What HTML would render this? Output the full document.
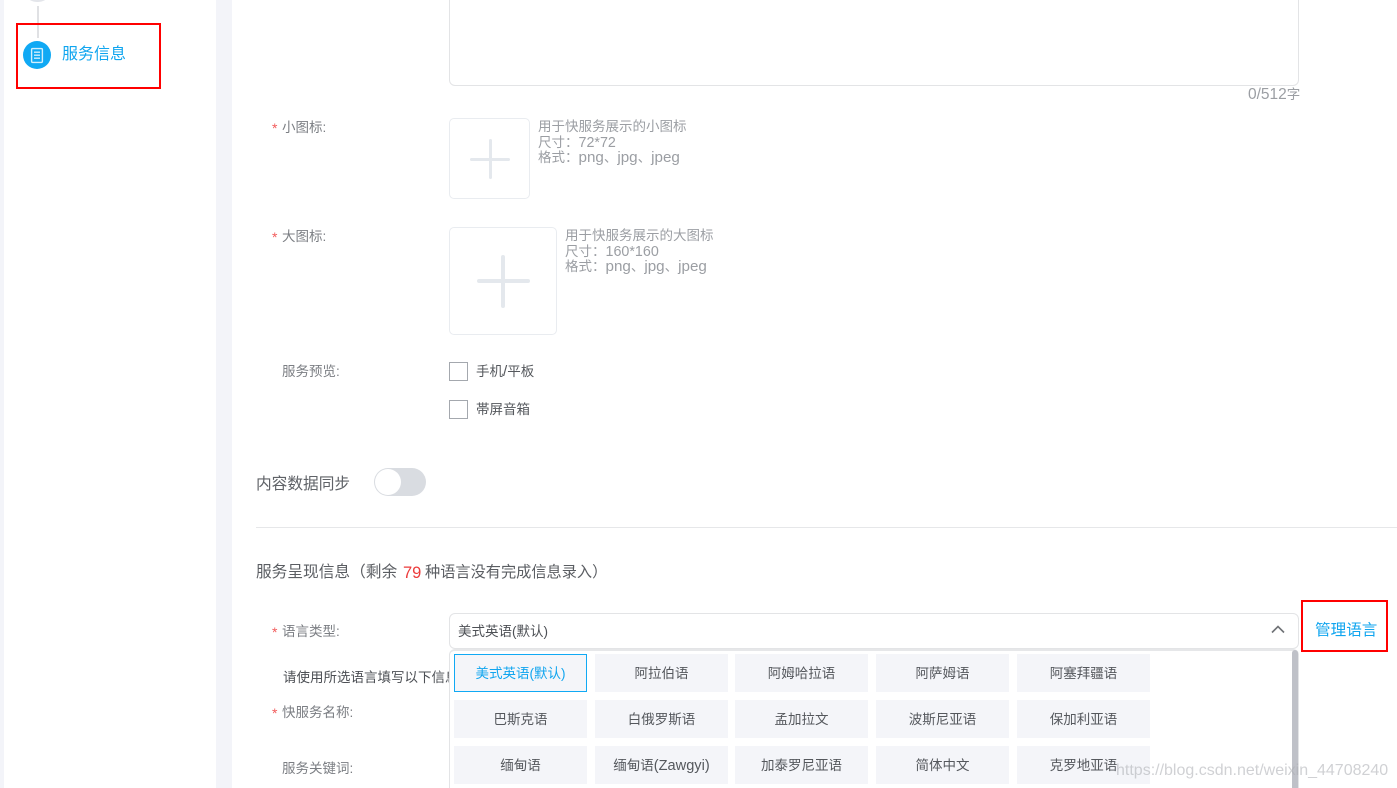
<!DOCTYPE html>
<html lang="zh"><head><meta charset="utf-8"><title>服务信息</title>
<style>
html,body{margin:0;padding:0;background:#fff;width:1397px;height:788px;overflow:hidden}
#p{position:absolute;left:0;top:0;width:1397px;height:788px;overflow:hidden;font-family:"Liberation Sans","Noto Sans CJK SC",sans-serif;color:#55585d}
#p div{position:absolute;box-sizing:border-box}
.t{white-space:nowrap;line-height:20px;font-size:13.5px}
.l{color:#7b7e83}
.h{color:#9b9ea3;font-size:13.5px;line-height:15.5px;white-space:nowrap}
.n{font-size:14.3px;line-height:0}
.m{font-size:15.2px;line-height:0}
.s{color:#f25b5b;font-size:14px;line-height:20px}
.up{border:1.5px solid #e9ecf0;border-radius:5px;background:#fff}
.c{border:1.5px solid #a4a8ae;background:#fff;width:19px;height:19px}
.o{width:133px;height:38px;background:#f4f5f9;text-align:center;line-height:40px;font-size:13.5px;color:#55585d;white-space:nowrap}
.r{border:2px solid #f00}
</style></head><body><div id="p">
<div style="left:0;top:0;width:4px;height:788px;background:#f3f4f9"></div>
<div style="left:216px;top:0;width:16px;height:788px;background:#f3f4f9"></div>

<div style="left:28px;top:-8px;width:19px;height:10px;border-radius:50%;background:#e3e5ea"></div>
<div style="left:37px;top:6px;width:2px;height:32px;background:#e0e1e4"></div>
<div style="left:23px;top:41px;width:28px;height:28px;border-radius:50%;background:#10a9f4"></div>
<svg style="position:absolute;left:23px;top:41px" width="28" height="28" viewBox="0 0 28 28" fill="none" stroke="#d3effd" stroke-width="1.4"><rect x="8.6" y="7.6" width="10.8" height="13.8" rx="1"/><path d="M11 11.2h6M11 14.2h6M11 17.2h6"/></svg>
<div class="t" style="left:62px;top:46px;font-size:16px;line-height:18px;color:#10a5ef">服务信息</div>
<div class="r" style="left:16px;top:23px;width:145px;height:66px"></div>

<div style="left:449px;top:-10px;width:850px;height:96px;border:1px solid #e3e4e6;border-radius:6px"></div>
<div class="t" style="left:1248px;top:85px;color:#9b9ea3;font-size:13.5px"><span class="m" style="font-size:15.5px">0/512</span>字</div>

<div class="s" style="left:272px;top:118px">*</div>
<div class="t l" style="left:282px;top:118px">小图标:</div>
<div class="up" style="left:449px;top:118px;width:81px;height:81px"></div>
<div style="left:470px;top:158px;width:40px;height:3px;background:#e4e8ed;border-radius:2px"></div>
<div style="left:489px;top:139px;width:3px;height:40px;background:#e4e8ed;border-radius:2px"></div>
<div class="h" style="left:538px;top:119px">用于快服务展示的小图标<br>尺寸：<span class="n">72*72</span><br>格式：<span class="m">png</span>、<span class="m">jpg</span>、<span class="m">jpeg</span></div>

<div class="s" style="left:272px;top:227px">*</div>
<div class="t l" style="left:282px;top:227px">大图标:</div>
<div class="up" style="left:449px;top:227px;width:108px;height:108px"></div>
<div style="left:477px;top:279px;width:53px;height:4px;background:#e4e8ed;border-radius:2px"></div>
<div style="left:501px;top:255px;width:4px;height:53px;background:#e4e8ed;border-radius:2px"></div>
<div class="h" style="left:565px;top:228px">用于快服务展示的大图标<br>尺寸：<span class="n">160*160</span><br>格式：<span class="m">png</span>、<span class="m">jpg</span>、<span class="m">jpeg</span></div>

<div class="t l" style="left:282px;top:362px">服务预览:</div>
<div class="c" style="left:449px;top:362px"></div>
<div class="t" style="left:476px;top:362px">手机<span class="m">/</span>平板</div>
<div class="c" style="left:449px;top:400px"></div>
<div class="t" style="left:476px;top:400px">帯屏音箱</div>

<div class="t" style="left:256px;top:476px;font-size:15.7px;line-height:18px;color:#5f6267">内容数据同步</div>
<div style="left:374px;top:468px;width:52px;height:28px;border-radius:14px;background:#d9dce1"></div>
<div style="left:375px;top:469px;width:26px;height:26px;border-radius:50%;background:#fff"></div>

<div style="left:256px;top:527px;width:1141px;height:1px;background:#e6e7e9"></div>

<div class="t" style="left:256px;top:564px;font-size:15.7px;line-height:18px;color:#5a5d62">服务呈现信息（剩余</div>
<div class="t" style="left:403px;top:564px;font-size:16.5px;line-height:18px;color:#ec3b3b">79</div>
<div class="t" style="left:425px;top:564px;font-size:15.2px;line-height:18px;color:#5a5d62">种语言没有完成信息录入）</div>

<div class="s" style="left:272px;top:622px">*</div>
<div class="t l" style="left:282px;top:622px">语言类型:</div>
<div style="left:449px;top:613px;width:850px;height:36px;border:1px solid #e3e4e6;border-radius:6px"></div>
<div class="t" style="left:458px;top:622px;font-size:13.5px;color:#4d5055">美式英语(默认)</div>
<svg style="position:absolute;left:1270px;top:623px" width="16" height="12" viewBox="0 0 16 12" fill="none" stroke="#6f7276" stroke-width="1.6"><path d="M2 9.5L8 3.5L14 9.5"/></svg>
<div class="r" style="left:1301px;top:600px;width:87px;height:52px"></div>
<div class="t" style="left:1315px;top:622px;font-size:15.6px;line-height:18px;color:#10a5ef">管理语言</div>

<div class="t" style="left:283px;top:668px;color:#4d5055">请使用所选语言填写以下信息</div>
<div class="s" style="left:272px;top:703px">*</div>
<div class="t l" style="left:282px;top:703px">快服务名称:</div>
<div class="t l" style="left:282px;top:759px">服务关键词:</div>

<div style="left:449px;top:649px;width:850px;height:150px;background:#fff;border:1px solid #e3e4e6;border-top:2px solid #e6e7e9;border-radius:6px 6px 0 0"></div>
<div style="left:1292px;top:650px;width:6px;height:138px;background:#bfc1c8;border-radius:3px 3px 0 0"></div>

<div class="o" style="left:454px;top:654px;color:#10a5ef;border:1px solid #10a9f4;line-height:38px">美式英语(默认)</div>
<div class="o" style="left:595px;top:654px">阿拉伯语</div>
<div class="o" style="left:735px;top:654px">阿姆哈拉语</div>
<div class="o" style="left:876px;top:654px">阿萨姆语</div>
<div class="o" style="left:1017px;top:654px">阿塞拜疆语</div>
<div class="o" style="left:454px;top:700px">巴斯克语</div>
<div class="o" style="left:595px;top:700px">白俄罗斯语</div>
<div class="o" style="left:735px;top:700px">孟加拉文</div>
<div class="o" style="left:876px;top:700px">波斯尼亚语</div>
<div class="o" style="left:1017px;top:700px">保加利亚语</div>
<div class="o" style="left:454px;top:746px">缅甸语</div>
<div class="o" style="left:595px;top:746px">缅甸语<span class="n" style="font-size:14.6px">(Zawgyi)</span></div>
<div class="o" style="left:735px;top:746px">加泰罗尼亚语</div>
<div class="o" style="left:876px;top:746px">简体中文</div>
<div class="o" style="left:1017px;top:746px">克罗地亚语</div>

<div class="t" style="left:1116px;top:761px;font-size:16px;color:rgba(170,172,176,.55)">https://blog.csdn.net/weixin_44708240</div>
</div></body></html>
